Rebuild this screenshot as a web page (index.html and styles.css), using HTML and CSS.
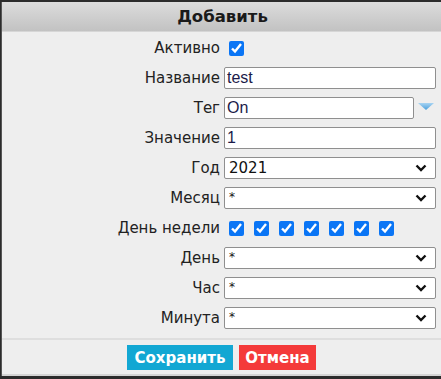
FILE: index.html
```html
<!DOCTYPE html>
<html lang="ru">
<head>
<meta charset="utf-8">
<link rel="stylesheet" href="styles.css">
</head>
<body>
<div class="dialog">
  <div class="dialog-head">Добавить</div>
  <form class="dialog-body">
    <label class="lbl">Активно</label>
    <div class="field"><input type="checkbox" class="cb" checked></div>

    <label class="lbl">Название</label>
    <div class="field"><input type="text" class="inp" value="test"></div>

    <label class="lbl">Тег</label>
    <div class="field tag-field">
      <input type="text" class="inp" value="On">
      <svg class="tag-arrow" width="16" height="8" viewBox="0 0 16 8">
        <defs><linearGradient id="tg" x1="0" y1="0" x2="0" y2="1"><stop offset="0" stop-color="#a8d4f2"/><stop offset="1" stop-color="#4a9fdc"/></linearGradient></defs>
        <path d="M0 0 H16 L8 7 Z" fill="url(#tg)"/>
      </svg>
    </div>

    <label class="lbl">Значение</label>
    <div class="field"><input type="text" class="inp" value="1"></div>

    <label class="lbl">Год</label>
    <div class="field"><div class="sel"><span>2021</span><svg class="chev" width="12" height="8" viewBox="0 0 12 8"><path d="M1.5 1.5 L6 6 L10.5 1.5" fill="none" stroke="#111" stroke-width="2.4"/></svg></div></div>

    <label class="lbl">Месяц</label>
    <div class="field"><div class="sel"><span class="star">*</span><svg class="chev" width="12" height="8" viewBox="0 0 12 8"><path d="M1.5 1.5 L6 6 L10.5 1.5" fill="none" stroke="#111" stroke-width="2.4"/></svg></div></div>

    <label class="lbl">День недели</label>
    <div class="field days">
      <input type="checkbox" class="cb" checked>
      <input type="checkbox" class="cb" checked>
      <input type="checkbox" class="cb" checked>
      <input type="checkbox" class="cb" checked>
      <input type="checkbox" class="cb" checked>
      <input type="checkbox" class="cb" checked>
      <input type="checkbox" class="cb" checked>
    </div>

    <label class="lbl">День</label>
    <div class="field"><div class="sel"><span class="star">*</span><svg class="chev" width="12" height="8" viewBox="0 0 12 8"><path d="M1.5 1.5 L6 6 L10.5 1.5" fill="none" stroke="#111" stroke-width="2.4"/></svg></div></div>

    <label class="lbl">Час</label>
    <div class="field"><div class="sel"><span class="star">*</span><svg class="chev" width="12" height="8" viewBox="0 0 12 8"><path d="M1.5 1.5 L6 6 L10.5 1.5" fill="none" stroke="#111" stroke-width="2.4"/></svg></div></div>

    <label class="lbl">Минута</label>
    <div class="field"><div class="sel"><span class="star">*</span><svg class="chev" width="12" height="8" viewBox="0 0 12 8"><path d="M1.5 1.5 L6 6 L10.5 1.5" fill="none" stroke="#111" stroke-width="2.4"/></svg></div></div>
  </form>
  <div class="dialog-foot">
    <button type="button" class="btn btn-save">Сохранить</button>
    <button type="button" class="btn btn-cancel">Отмена</button>
  </div>
</div>
</body>
</html>
```

FILE: styles.css
```css
html, body {
  margin: 0;
  padding: 0;
  background: #2b2b2b;
}
body {
  font-family: "DejaVu Sans", Verdana, sans-serif;
  color: #222;
}
.dialog {
  margin-top: 2px;
  margin-left: 1px;
  width: 440px;
  height: 374px;
  background: #eeeeee;
  border-left: 1px solid #555;
  box-sizing: border-box;
  display: flex;
  flex-direction: column;
}
.dialog-head {
  height: 30px;
  background: linear-gradient(#dcdcdc, #c2c2c2);
  border-bottom: 1px solid #d6d6d6;
  box-sizing: border-box;
  display: flex;
  align-items: center;
  justify-content: center;
  font-weight: bold;
  font-size: 16.5px;
  color: #1a1a1a;
  padding-left: 2px;
}
.dialog-body {
  margin: 0;
  padding: 5px 0 9px 0;
  display: grid;
  grid-template-columns: 218px 212px;
  column-gap: 4px;
  row-gap: 8px;
  grid-auto-rows: 22px;
  border-bottom: 2px solid #dedede;
}
.lbl {
  text-align: right;
  font-size: 15px;
  line-height: 22px;
  color: #222;
  white-space: nowrap;
}
.field {
  display: flex;
  align-items: center;
}
.cb {
  margin: 0 0 0 5px;
  width: 15px;
  height: 15px;
  accent-color: #0a75f5;
}
.days {
  gap: 10px;
}
.days .cb {
  margin: 0;
}
.days .cb:first-child {
  margin-left: 5px;
}
.inp {
  width: 212px;
  height: 22px;
  box-sizing: border-box;
  border: 1px solid #8f8f8f;
  border-radius: 2px;
  background: #fff;
  font-family: "Liberation Sans", Arial, sans-serif;
  font-size: 16px;
  color: #1b1b4a;
  padding: 0 2px;
  margin: 0;
}
.tag-field .inp {
  width: 190px;
}
.tag-arrow {
  margin-left: 4px;
  margin-top: -2px;
}
.sel {
  width: 212px;
  height: 22px;
  box-sizing: border-box;
  border: 1px solid #8f8f8f;
  border-radius: 2px;
  background: #fff;
  display: flex;
  align-items: center;
  justify-content: space-between;
  padding: 0 8px 0 4px;
  font-size: 15px;
  color: #111;
}
.sel .star {
  font-size: 12px;
  align-self: flex-start;
  margin-top: 2px;
}
.dialog-foot {
  flex: 1;
  display: flex;
  justify-content: center;
  align-items: flex-start;
  gap: 6px;
  padding-top: 5px;
  border-bottom: 2px solid #d4d4d4;
}
.btn {
  height: 25px;
  border: none;
  border-radius: 0;
  padding: 0 4px;
  font-family: "DejaVu Sans", Verdana, sans-serif;
  font-weight: bold;
  font-size: 15px;
  color: #fff;
  cursor: pointer;
}
.btn-save {
  background: #12a7d3;
  width: 106px;
}
.btn-cancel {
  background: #f43a3a;
  width: 77px;
}
```
